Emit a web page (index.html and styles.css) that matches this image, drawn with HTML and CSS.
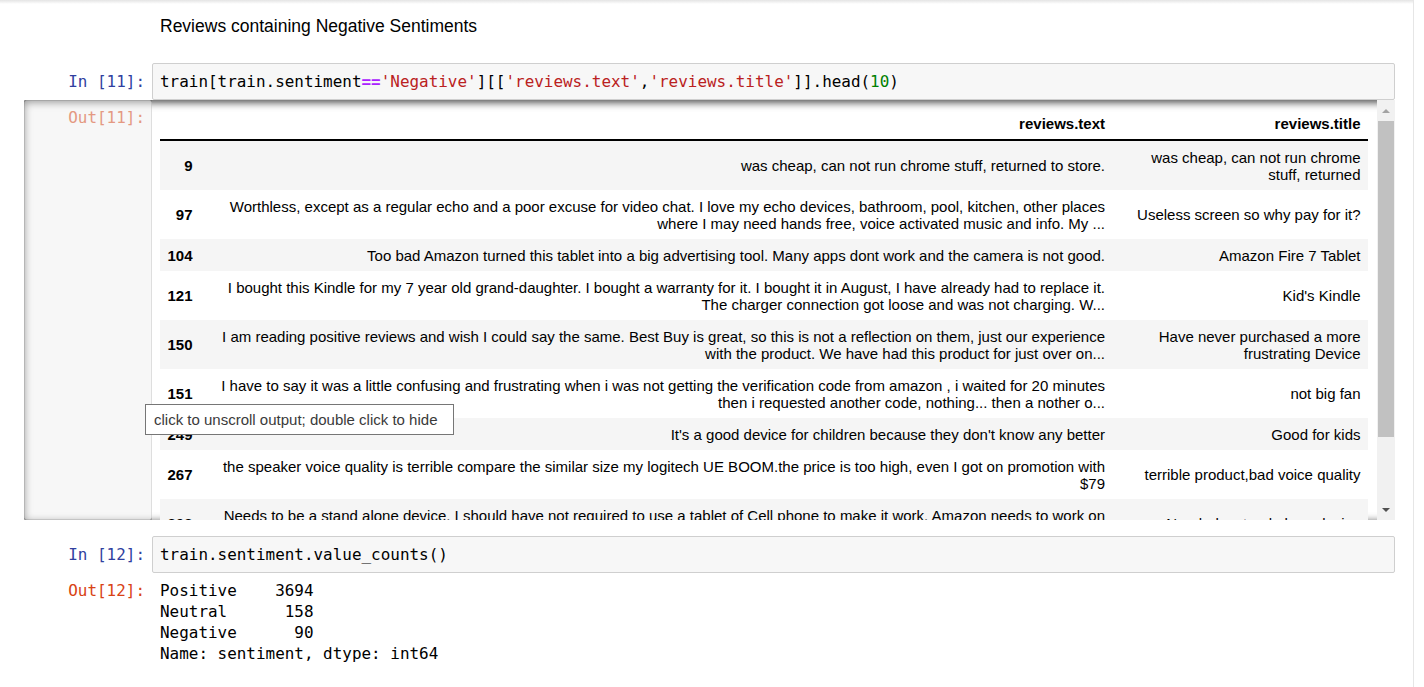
FILE: index.html
```html
<!DOCTYPE html>
<html>
<head>
<meta charset="utf-8">
<link rel="stylesheet" href="styles.css">
</head>
<body>
<div class="page">
  <div class="md">Reviews containing Negative Sentiments</div>

  <div class="row first-in">
    <div class="prompt in-prompt">In&nbsp;[11]:</div>
    <div class="input-area"><pre class="code">train[train.sentiment<span class="op">==</span><span class="str">'Negative'</span>][[<span class="str">'reviews.text'</span>,<span class="str">'reviews.title'</span>]].head(<span class="num">10</span>)</pre></div>
  </div>

  <div class="scroll">
    <div class="prompt out-overlay">Out[11]:</div>
    <div class="table-wrap">
      <table class="df">
        <colgroup><col class="c-idx"><col class="c-text"><col class="c-title"></colgroup>
        <thead>
          <tr><th></th><th>reviews.text</th><th>reviews.title</th></tr>
        </thead>
        <tbody>
          <tr><th>9</th><td>was cheap, can not run chrome stuff, returned to store.</td><td>was cheap, can not run chrome<br>stuff, returned</td></tr>
          <tr><th>97</th><td>Worthless, except as a regular echo and a poor excuse for video chat. I love my echo devices, bathroom, pool, kitchen, other places<br>where I may need hands free, voice activated music and info. My ...</td><td>Useless screen so why pay for it?</td></tr>
          <tr><th>104</th><td>Too bad Amazon turned this tablet into a big advertising tool. Many apps dont work and the camera is not good.</td><td>Amazon Fire 7 Tablet</td></tr>
          <tr><th>121</th><td>I bought this Kindle for my 7 year old grand-daughter. I bought a warranty for it. I bought it in August, I have already had to replace it.<br>The charger connection got loose and was not charging. W...</td><td>Kid's Kindle</td></tr>
          <tr><th>150</th><td>I am reading positive reviews and wish I could say the same. Best Buy is great, so this is not a reflection on them, just our experience<br>with the product. We have had this product for just over on...</td><td>Have never purchased a more<br>frustrating Device</td></tr>
          <tr><th>151</th><td>I have to say it was a little confusing and frustrating when i was not getting the verification code from amazon , i waited for 20 minutes<br>then i requested another code, nothing... then a nother o...</td><td>not big fan</td></tr>
          <tr><th>249</th><td>It's a good device for children because they don't know any better</td><td>Good for kids</td></tr>
          <tr><th>267</th><td>the speaker voice quality is terrible compare the similar size my logitech UE BOOM.the price is too high, even I got on promotion with<br>$79</td><td>terrible product,bad voice quality</td></tr>
          <tr><th>303</th><td>Needs to be a stand alone device. I should have not required to use a tablet of Cell phone to make it work. Amazon needs to work on<br>this.</td><td>Needed a stand alone device</td></tr>
        </tbody>
      </table>
    </div>
    <div class="scrollbar">
      <div class="sb-btn"><span class="arrow-up"></span></div>
      <div class="sb-thumb"></div>
      <div class="sb-track"></div>
      <div class="sb-btn"><span class="arrow-down"></span></div>
    </div>
    <div class="tooltip">click to unscroll output; double click to hide</div>
  </div>

  <div class="row second-in">
    <div class="prompt in-prompt">In&nbsp;[12]:</div>
    <div class="input-area"><pre class="code">train.sentiment.value_counts()</pre></div>
  </div>

  <div class="row">
    <div class="prompt out-prompt">Out[12]:</div>
    <pre class="out-text">Positive    3694
Neutral      158
Negative      90
Name: sentiment, dtype: int64</pre>
  </div>
</div>
</body>
</html>
```

FILE: styles.css
```css
html, body {
  margin: 0;
  padding: 0;
  background: #fff;
}

body {
  font-family: "Liberation Sans", Arial, sans-serif;
  color: #000;
}

.page {
  width: 1414px;
  height: 687px;
  box-sizing: border-box;
  padding: 14px 0 0 24px;
  border-right: 1px solid #e6e6e6;
  background: linear-gradient(#e4e4e4, #ffffff 4px);
  overflow: hidden;
}

.md {
  padding-left: 136px;
  font-size: 17.5px;
  line-height: 24px;
  color: #000;
}

.row {
  display: flex;
  width: 1371px;
}

.first-in {
  margin-top: 25px;
}

.second-in {
  margin-top: 16px;
}

.prompt {
  width: 128px;
  flex: none;
  box-sizing: border-box;
  padding: 8px 7px 0 0;
  text-align: right;
  font-family: "DejaVu Sans Mono", "Liberation Mono", monospace;
  font-size: 15.95px;
  line-height: 21px;
  white-space: nowrap;
}

.in-prompt {
  color: #303F9F;
}

.out-prompt {
  color: #D84315;
  padding-top: 7px;
}

.input-area {
  flex: 1;
  box-sizing: border-box;
  border: 1px solid #cfcfcf;
  border-radius: 2px;
  background: #f7f7f7;
  padding: 7px 7px;
}

.code, .out-text {
  margin: 0;
  font-family: "DejaVu Sans Mono", "Liberation Mono", monospace;
  font-size: 15.95px;
  line-height: 21px;
  color: #000;
  white-space: pre;
}

.out-text {
  padding: 7px 0 0 8px;
}

.op { color: #AA22FF; font-weight: bold; }
.str { color: #BA2121; }
.num { color: #008000; }

/* scrolled output */
.scroll {
  position: relative;
  display: flex;
  width: 1371px;
  height: 420px;
  border-radius: 2px;
  box-shadow: inset 0 2px 8px rgba(0, 0, 0, 0.8);
}

.out-overlay {
  padding-top: 7px;
  color: #e49982;
  background: rgba(240, 240, 240, 0.5);
  box-shadow: inset 0 0 1px #000;
  border-radius: 2px;
}

.table-wrap {
  flex: 1;
  overflow: hidden;
  padding: 7px 9px 0 8px;
}

.df {
  border-collapse: collapse;
  border-spacing: 0;
  table-layout: fixed;
  width: 1208px;
  font-size: 15px;
  line-height: 17px;
  color: #000;
}

.c-idx { width: 40px; }
.c-text { width: 912.5px; }
.c-title { width: 255.5px; }

.df th, .df td {
  padding: 7.5px;
  text-align: right;
  vertical-align: middle;
  border: none;
  white-space: nowrap;
}

.df th {
  font-weight: bold;
}

.df thead {
  border-bottom: 2px solid #000;
}

.df tbody tr:nth-child(odd) {
  background: #f5f5f5;
}

/* scrollbar */
.scrollbar {
  width: 18px;
  flex: none;
  display: flex;
  flex-direction: column;
  background: #f1f1f1;
}

.sb-btn {
  height: 21px;
  flex: none;
  display: flex;
  align-items: center;
  justify-content: center;
}

.sb-thumb {
  height: 316px;
  flex: none;
  margin: 0 1px;
  background: #c1c1c1;
}

.sb-track {
  flex: 1;
}

.arrow-up {
  width: 0;
  height: 0;
  border-left: 4px solid transparent;
  border-right: 4px solid transparent;
  border-bottom: 4px solid #a3a3a3;
}

.arrow-down {
  width: 0;
  height: 0;
  border-left: 4px solid transparent;
  border-right: 4px solid transparent;
  border-top: 4px solid #505050;
}

.tooltip {
  position: absolute;
  left: 121px;
  top: 304px;
  box-sizing: border-box;
  width: 309px;
  height: 31px;
  padding: 0 8px;
  border: 1px solid #767676;
  background: #fff;
  color: #3a3a3a;
  font-size: 15px;
  line-height: 29px;
  white-space: nowrap;
}
```
